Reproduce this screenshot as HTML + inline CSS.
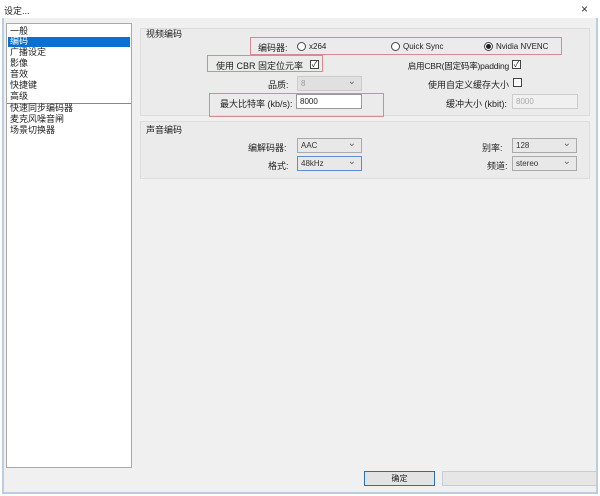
<!DOCTYPE html><html><head><meta charset="utf-8"><style>
*{box-sizing:border-box}
body{margin:0;width:600px;height:496px;background:#fff;font-family:"Liberation Sans","Noto Sans CJK SC",sans-serif;font-size:9px;color:#222;position:relative;overflow:hidden}
.a{position:absolute}
.win{left:2px;top:18px;width:596px;height:476px;background:#f0f0f0;border-left:2px solid #b9cfe0;border-bottom:2px solid #b9cfe0;border-right:2px solid #b9cfe0}
.list{left:6px;top:23px;width:126px;height:445px;background:#fff;border:1px solid #aaa}
.li{position:absolute;left:3px;font-size:9px;line-height:11px}
.grp{background:#ebebeb;border:1px solid #ddd}
.red{border:1px solid #d88a94}
.cb{width:65px;height:15px;background:#e8e8e8;border:1px solid #aaa;font-size:8px;padding:2px 3px;color:#333}
.cb:after{content:"⌄";position:absolute;right:5px;top:-1px;color:#666;font-size:10px}
.dis{background:#e0e0e0;color:#999;border-color:#ccc}
.rad{width:9px;height:9px;border:1px solid #444;border-radius:50%;background:#fff}
.chk{width:9px;height:9px;border:1px solid #444;background:#fff;font-size:8px;line-height:7px;text-align:center}
.r{text-align:right;white-space:nowrap}
</style></head><body>
<div class="a" style="left:4px;top:4px;font-size:9px">设定...</div>
<div class="a" style="left:581px;top:2px;font-size:12px;color:#333">×</div>
<div class="a win"></div>
<div class="a list">
<div class="li" style="top:2px">一般</div>
<div class="a" style="left:1px;top:13px;width:122px;height:10px;background:#0a6fd0"></div>
<div class="li" style="top:12px;color:#fff">编码</div>
<div class="li" style="top:23px">广播设定</div>
<div class="li" style="top:34px">影像</div>
<div class="li" style="top:45px">音效</div>
<div class="li" style="top:56px">快捷键</div>
<div class="li" style="top:67px">高级</div>
<div class="a" style="left:0;top:79px;width:124px;height:1px;background:#888"></div>
<div class="li" style="top:79px">快速同步编码器</div>
<div class="li" style="top:90px">麦克风噪音闸</div>
<div class="li" style="top:101px">场景切换器</div>
</div>
<div class="a grp" style="left:140px;top:28px;width:450px;height:88px"></div>
<div class="a" style="left:146px;top:27px">视频编码</div>
<div class="a grp" style="left:140px;top:121px;width:450px;height:58px"></div>
<div class="a" style="left:146px;top:123px">声音编码</div>

<div class="a red" style="left:250px;top:37px;width:312px;height:18px"></div>
<div class="a" style="left:258px;top:41px">编码器:</div>
<div class="a rad" style="left:297px;top:42px"></div><div class="a" style="left:309px;top:42px;font-size:8px">x264</div>
<div class="a rad" style="left:391px;top:42px"></div><div class="a" style="left:403px;top:42px;font-size:8px">Quick Sync</div>
<div class="a rad" style="left:484px;top:42px"><div style="width:5px;height:5px;margin:1px;border-radius:50%;background:#222"></div></div><div class="a" style="left:496px;top:42px;font-size:8px">Nvidia NVENC</div>

<div class="a red" style="left:207px;top:55px;width:116px;height:17px"></div>
<div class="a" style="left:216px;top:59px">使用 CBR 固定位元率</div>
<div class="a chk" style="left:310px;top:60px">✓</div>
<div class="a r" style="left:380px;width:129px;top:60px;font-size:8.5px;letter-spacing:-0.2px">启用CBR(固定码率)padding</div>
<div class="a chk" style="left:512px;top:60px">✓</div>

<div class="a" style="left:268px;top:78px">品质:</div>
<div class="a cb dis" style="left:297px;top:76px">8</div>
<div class="a r" style="left:400px;width:109px;top:78px">使用自定义缓存大小</div>
<div class="a chk" style="left:513px;top:78px"></div>

<div class="a red" style="left:209px;top:93px;width:175px;height:24px"></div>
<div class="a" style="left:220px;top:97px">最大比特率 (kb/s):</div>
<div class="a" style="left:296px;top:94px;width:66px;height:15px;background:#fff;border:1px solid #999;font-size:8px;padding:2px 3px">8000</div>
<div class="a" style="left:446px;top:97px">缓冲大小 (kbit):</div>
<div class="a" style="left:512px;top:94px;width:66px;height:15px;background:#f0f0f0;border:1px solid #ccc;font-size:8px;padding:2px 3px;color:#aaa">8000</div>

<div class="a" style="left:248px;top:141px">编解码器:</div>
<div class="a cb" style="left:297px;top:138px">AAC</div>
<div class="a" style="left:268px;top:159px">格式:</div>
<div class="a cb" style="left:297px;top:156px;border-color:#5a8ed0">48kHz</div>
<div class="a" style="left:482px;top:141px">别率:</div>
<div class="a cb" style="left:512px;top:138px">128</div>
<div class="a" style="left:487px;top:159px">频道:</div>
<div class="a cb" style="left:512px;top:156px">stereo</div>

<div class="a" style="left:364px;top:471px;width:71px;height:15px;background:#e3e3e3;border:1px solid #2f6fa8;text-align:center;font-size:8px;line-height:13px">确定</div>
<div class="a" style="left:442px;top:471px;width:155px;height:15px;background:#e6e6e6;border:1px solid #ccc"></div>
</body></html>
